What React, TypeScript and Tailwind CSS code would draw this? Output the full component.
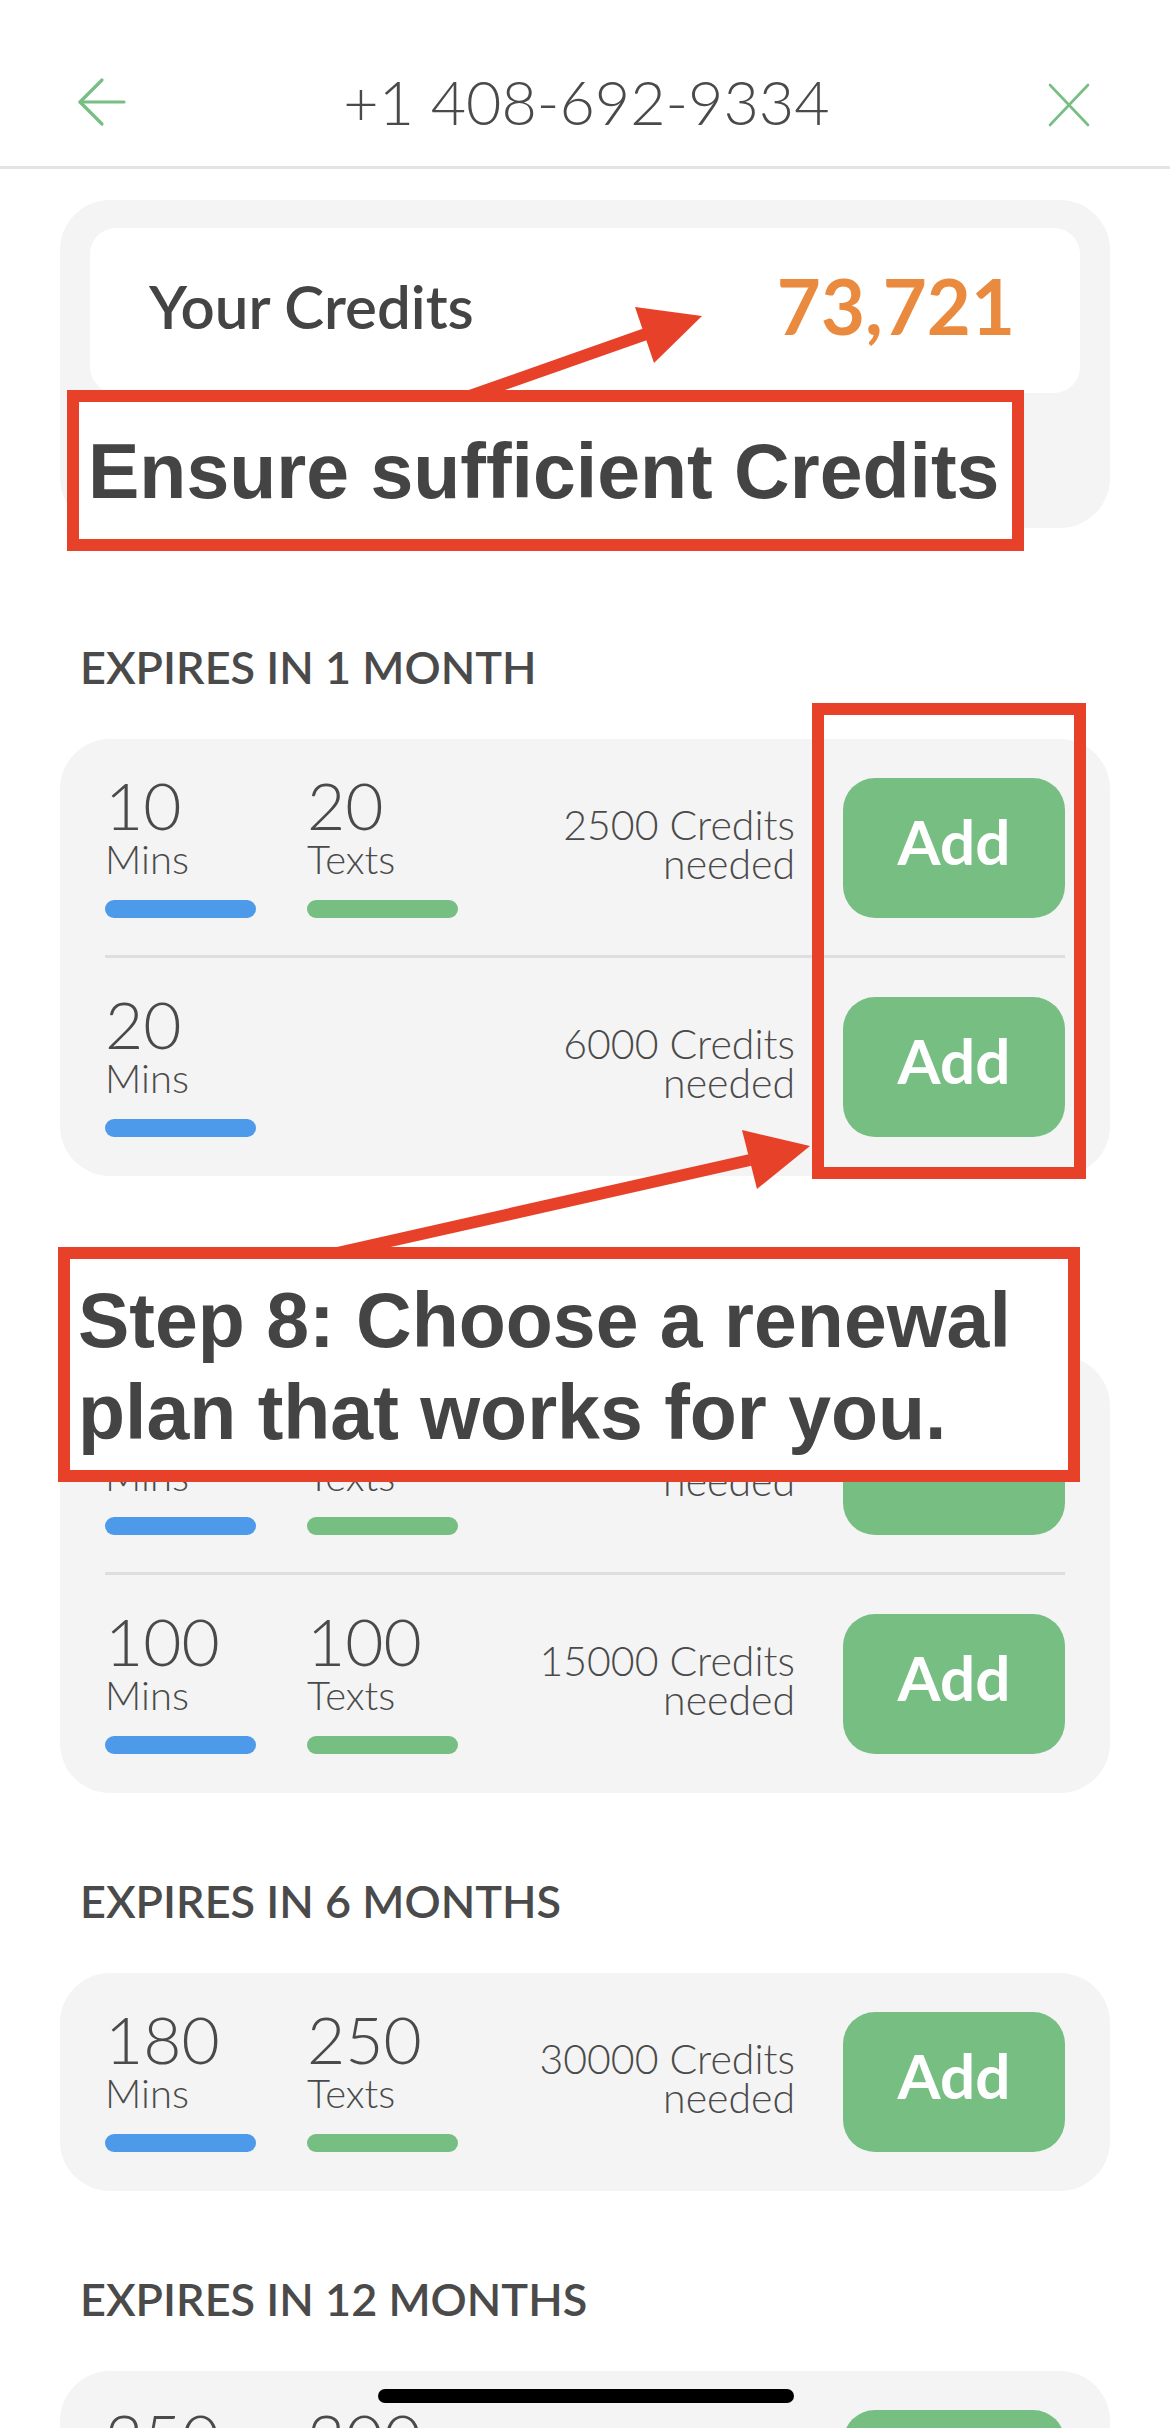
import React from "react";

type Plan = {
  mins: number;
  texts?: number;
  credits: number;
};

type Section = {
  title: string;
  plans: Plan[];
};

const sections: Section[] = [
  { title: "EXPIRES IN 1 MONTH", plans: [{ mins: 10, texts: 20, credits: 2500 }, { mins: 20, credits: 6000 }] },
  { title: "EXPIRES IN 3 MONTHS", plans: [{ mins: 50, texts: 50, credits: 7500 }, { mins: 100, texts: 100, credits: 15000 }] },
  { title: "EXPIRES IN 6 MONTHS", plans: [{ mins: 180, texts: 250, credits: 30000 }] },
  { title: "EXPIRES IN 12 MONTHS", plans: [{ mins: 250, texts: 300, credits: 45000 }] },
];

const Stat = ({ value, label, bar }: { value: number; label: string; bar: string }) => (
  <div className="flex flex-col h-full w-[151px]">
    <div className="text-[66px] leading-[54px] font-light text-[#4a4a4a]">{value}</div>
    <div className="mt-[6px] text-[40px] leading-[42px] font-light text-[#4a4a4a]">{label}</div>
    <div className={`mt-auto h-[18px] w-[151px] rounded-full ${bar}`} />
  </div>
);

const PlanRow = ({ plan }: { plan: Plan }) => (
  <div className="flex items-center h-[140px]">
    <Stat value={plan.mins} label="Mins" bar="bg-[#4c9ae9]" />
    {plan.texts !== undefined && (
      <div className="ml-[51px] h-full">
        <Stat value={plan.texts} label="Texts" bar="bg-[#77be83]" />
      </div>
    )}
    <div className="flex-1 mb-[8px] text-right text-[41px] leading-[39px] font-light text-[#4a4a4a]">
      {plan.credits} Credits
      <br />
      needed
    </div>
    <button className="ml-[48px] w-[222px] h-[140px] rounded-[32px] bg-[#77be83] flex items-center justify-center pb-[14px] text-white text-[62px] font-bold">
      Add
    </button>
  </div>
);

const PlanSection = ({ section, first }: { section: Section; first: boolean }) => (
  <section className={first ? "mt-[117px]" : "mt-[86px]"}>
    <h2 className="pl-[20px] text-[45px] leading-[45px] font-semibold text-[#4a4a4a]">{section.title}</h2>
    <div className="mt-[49px] rounded-[50px] bg-[#f4f4f4] px-[45px] py-[39px]">
      {section.plans.map((plan, i) => (
        <div key={i}>
          {i > 0 && <div className="mt-[37px] mb-[39px] h-[3px] bg-[#dedede]" />}
          <PlanRow plan={plan} />
        </div>
      ))}
    </div>
  </section>
);

export default function App() {
  return (
    <div className="relative w-[1170px] h-[2428px] overflow-hidden bg-white font-['Lato',sans-serif]">
      <header className="h-[169px] border-b-[3px] border-[#e4e4e4] flex items-center pt-[38px] pl-[76px] pr-[79px]">
        <svg width="50" height="50" viewBox="0 0 50 50" fill="none" stroke="#77be83" strokeWidth="3.2" strokeLinecap="round" strokeLinejoin="round">
          <path d="M48 25H4" />
          <path d="M26 3L4 25L26 47" />
        </svg>
        <div className="flex-1 text-center text-[61px] leading-[60px] font-light text-[#4a4a4a]">
          +1 408-692-9334
        </div>
        <svg className="mt-[6px]" width="44" height="46" viewBox="0 0 44 46" fill="none" stroke="#77be83" strokeWidth="2.6" strokeLinecap="round">
          <path d="M3 3L41 43" />
          <path d="M41 3L3 43" />
        </svg>
      </header>

      <main className="px-[60px] pt-[31px]">
        <div className="rounded-[50px] bg-[#f4f4f4] px-[30px] pt-[28px] pb-[135px]">
          <div className="h-[165px] rounded-[26px] bg-white flex items-center justify-between pl-[59px] pr-[65px] pb-[10px]">
            <span className="text-[60px] leading-[60px] font-semibold text-[#444444]">Your Credits</span>
            <span className="text-[76px] leading-[76px] font-bold text-[#e98a3f]">73,721</span>
          </div>
        </div>

        {sections.map((section, i) => (
          <PlanSection key={section.title} section={section} first={i === 0} />
        ))}
      </main>

      {/* annotations */}
      <div className="absolute left-[67px] top-[390px] w-[957px] h-[161px] border-[12px] border-[#e8412a] bg-white">
        <div className="pl-[9px] pt-[26px] font-['Liberation_Sans',Arial,sans-serif] font-bold text-[77px] leading-[86px] text-[#444444] whitespace-nowrap">
          Ensure sufficient Credits
        </div>
      </div>

      <div className="absolute left-[812px] top-[703px] w-[274px] h-[476px] border-[12px] border-[#e8412a]" />

      <div className="absolute left-[58px] top-[1247px] w-[1022px] h-[235px] border-[12px] border-[#e8412a] bg-white">
        <div className="pl-[8px] pt-[15px] font-['Liberation_Sans',Arial,sans-serif] font-bold text-[77px] leading-[92px] text-[#444444] whitespace-nowrap">
          Step 8: Choose a renewal
          <br />
          plan that works for you.
        </div>
      </div>

      <svg className="absolute left-0 top-0 pointer-events-none" width="1170" height="2428" viewBox="0 0 1170 2428">
        <line x1="470" y1="396" x2="646" y2="334" stroke="#e8412a" strokeWidth="12" />
        <polygon points="702,316 635,307 654,363" fill="#e8412a" />
        <line x1="337" y1="1253" x2="750" y2="1160" stroke="#e8412a" strokeWidth="12" />
        <polygon points="810,1146 742,1130 757,1189" fill="#e8412a" />
      </svg>

      <div className="absolute left-[378px] top-[2389px] w-[416px] h-[14px] rounded-full bg-black" />
    </div>
  );
}
